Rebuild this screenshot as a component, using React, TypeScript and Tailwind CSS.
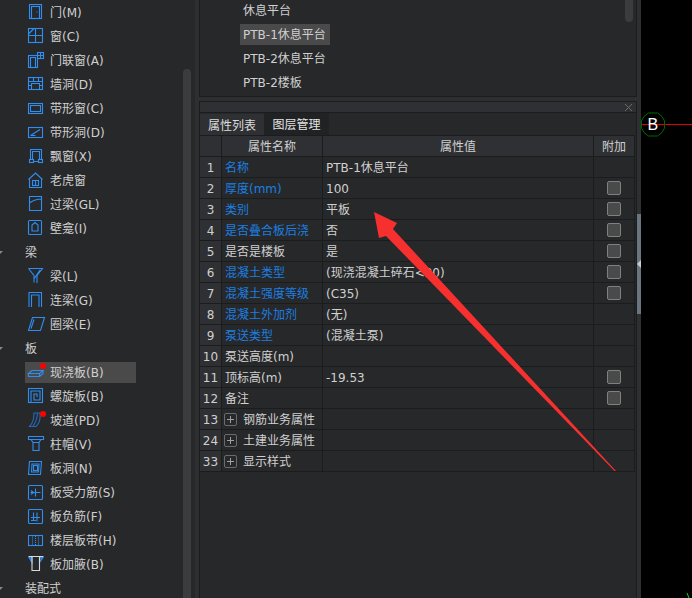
import React from 'react';

const blue = '#2f8ef0';

const icons: Record<string, React.ReactNode> = {
    door: <><rect x="3.5" y="2.5" width="12" height="14" /><rect x="5.5" y="4.5" width="8" height="12" /><path d="M10.5 10h1" /></>,
    window: <><rect x="2.5" y="2.5" width="14" height="14" /><path d="M9.5 2.5v14M2.5 9.5h14M2.5 8L8 2.5" /></>,
    doorWindow: <><rect x="2.5" y="5.5" width="9" height="12" /><rect x="4.5" y="7.5" width="5" height="10" /><rect x="11.5" y="2.5" width="6" height="6" /><path d="M14.5 2.5v6M11.5 5.5h6" /></>,
    wallHole: <><rect x="2.5" y="3.5" width="14" height="12" /><path d="M2.5 7.5h14M7.5 3.5v4M12.5 3.5v4M2.5 11.5h3M13.5 11.5h3M5.5 15.5v-6h8v6" /></>,
    strip: <><rect x="2.5" y="5.5" width="14" height="10" /><rect x="4.5" y="7.5" width="10" height="6" /></>,
    stripHole: <><rect x="2.5" y="5.5" width="14" height="10" /><path d="M4.5 13.5h5M4.5 13.5L14 7.5" /></>,
    bay: <><path d="M4.5 13.5V3.5h11v10M6.5 13.5V5.5h7v8M7.5 15.5h5" /><rect x="3.5" y="13.5" width="4" height="3" /><rect x="12.5" y="13.5" width="4" height="3" /></>,
    dormer: <><path d="M2.5 9.5l7-6.5 7 6.5M3.5 9v8.5h12V9" /><rect x="6.5" y="10.5" width="6" height="5" /><path d="M9.5 10.5v5" /></>,
    lintel: <><path d="M3.5 2.5h12v14h-12zM3.5 9Q9 5 15.5 5" /></>,
    niche: <><rect x="2.5" y="2.5" width="13" height="14" rx="1" /><path d="M6 13V7l3-2.5L12 7v6z" /></>,
    beam: <><path d="M2.5 2.5h14L11 9.5v7.5M2.5 2.5L8 9.5v7M8 13l6-9" /></>,
    linkBeam: <><path d="M3 17V2.5h12.5V17M5.5 17V5H13v12" /></>,
    ringBeam: <><path d="M6.5 3.5h12l-4 13H2.5zM8 5.5l-3 9" /></>,
    slab: <><path d="M2.5 11.5h11l3.5-3H6zM2.5 11.5v3h11v-3M13.5 14.5l3.5-3v-3" /><circle cx="17" cy="4" r="3" fill="#f00" stroke="none" /></>,
    spiral: <><rect x="2.5" y="2.5" width="14" height="14" /><path d="M5 16.5V5h9v9H8V8h3v3" /></>,
    ramp: <><path d="M3.5 16.5Q8 12 8 3h6q1 9-4 13.5zM7 16q4-5 4.5-13" stroke="#2569b8" /><circle cx="17" cy="4" r="3" fill="#f00" stroke="none" /></>,
    cap: <><path d="M2.5 2.5h15v3h-15zM5 5.5l2 3v8h6v-8l2-3M7 8.5h6" /></>,
    slabHole: <><path d="M3.5 3.5h12l-1 13h-12zM6 6h7l-.5 8H5.5z" /><rect x="7.5" y="7.5" width="4" height="5" /></>,
    rebar: <><rect x="2.5" y="3.5" width="14" height="14" rx="1" /><path d="M4.5 10.5h10M9.5 6.5v8M5 8.5l2.5 2-2.5 2" /></>,
    negRebar: <><rect x="2.5" y="3.5" width="14" height="14" rx="1" /><path d="M7.5 6.5v8M11 6.5v9M5 11.5h9M5 14.5h5" /></>,
    band: <><rect x="2.5" y="5.5" width="14" height="10" /><path d="M6.5 5.5v10M12.5 5.5v10M9.5 6v9" strokeDasharray="1 1" /></>,
    haunch: <><path d="M3 3.5h3v5zM17 3.5h-3.500v5z" fill="#2569b8" /><path d="M2.5 2.5h15M6 3v13.5h7.500V3" stroke="#d8d8d8" /></>,
};

const Icon = ({ name }: { name: string }) => (
    <svg width="20" height="20" viewBox="0 0 20 20" fill="none" stroke={blue} strokeWidth="1.1" className="shrink-0">
        {icons[name]}
    </svg>
);

type SideRow = { label: string; icon?: string; active?: boolean };

const sideRows: SideRow[] = [
    { label: '门(M)', icon: 'door' },
    { label: '窗(C)', icon: 'window' },
    { label: '门联窗(A)', icon: 'doorWindow' },
    { label: '墙洞(D)', icon: 'wallHole' },
    { label: '带形窗(C)', icon: 'strip' },
    { label: '带形洞(D)', icon: 'stripHole' },
    { label: '飘窗(X)', icon: 'bay' },
    { label: '老虎窗', icon: 'dormer' },
    { label: '过梁(GL)', icon: 'lintel' },
    { label: '壁龛(I)', icon: 'niche' },
    { label: '梁' },
    { label: '梁(L)', icon: 'beam' },
    { label: '连梁(G)', icon: 'linkBeam' },
    { label: '圈梁(E)', icon: 'ringBeam' },
    { label: '板' },
    { label: '现浇板(B)', icon: 'slab', active: true },
    { label: '螺旋板(B)', icon: 'spiral' },
    { label: '坡道(PD)', icon: 'ramp' },
    { label: '柱帽(V)', icon: 'cap' },
    { label: '板洞(N)', icon: 'slabHole' },
    { label: '板受力筋(S)', icon: 'rebar' },
    { label: '板负筋(F)', icon: 'negRebar' },
    { label: '楼层板带(H)', icon: 'band' },
    { label: '板加腋(B)', icon: 'haunch' },
    { label: '装配式' },
];

type PropRow = { no: number; name: string; value?: string; link?: boolean; check?: boolean; group?: boolean };

const propRows: PropRow[] = [
    { no: 1, name: '名称', value: 'PTB-1休息平台', link: true },
    { no: 2, name: '厚度(mm)', value: '100', link: true, check: true },
    { no: 3, name: '类别', value: '平板', link: true, check: true },
    { no: 4, name: '是否叠合板后浇', value: '否', link: true, check: true },
    { no: 5, name: '是否是楼板', value: '是', check: true },
    { no: 6, name: '混凝土类型', value: '(现浇混凝土碎石<20)', link: true, check: true },
    { no: 7, name: '混凝土强度等级', value: '(C35)', link: true, check: true },
    { no: 8, name: '混凝土外加剂', value: '(无)', link: true },
    { no: 9, name: '泵送类型', value: '(混凝土泵)', link: true },
    { no: 10, name: '泵送高度(m)' },
    { no: 11, name: '顶标高(m)', value: '-19.53', check: true },
    { no: 12, name: '备注', check: true },
    { no: 13, name: '钢筋业务属性', group: true },
    { no: 24, name: '土建业务属性', group: true },
    { no: 33, name: '显示样式', group: true },
];

const SideItem = ({ row }: { row: SideRow }) => {
    if (!row.icon) {
        return (
            <div className="h-6 flex items-center">
                <svg width="3" height="4" viewBox="0 0 3 4" fill="#8a8a8a" className="mr-[22px]"><path d="M0 1h3L0 4z" /></svg>
                <span className="pt-[2px]">{row.label}</span>
            </div>
        );
    }
    return (
        <div className="h-6 flex items-center">
            <div className={`ml-[25px] w-[111px] h-[21px] pl-px flex items-center gap-1 ${row.active ? 'bg-[#4a4a4b]' : ''}`}>
                <Icon name={row.icon} />
                <span className="pt-[2px]">{row.label}</span>
            </div>
        </div>
    );
};

const App: React.FC = () => {
    return (
        <div className="relative w-[692px] h-[598px] flex overflow-hidden bg-[#2e2f31] text-[12px] leading-none text-[#d0d0d0] font-['DejaVu_Sans','Noto_Sans_CJK_SC',sans-serif]">
            {/* component tree */}
            <aside className="w-[195px] h-full flex bg-[#27282a] overflow-hidden">
                <div className="flex-1">
                    {sideRows.map(row => <SideItem key={row.label} row={row} />)}
                </div>
                <div className="w-2 mr-1 mt-[69px] rounded-t bg-[#3b3c3e]" />
            </aside>

            {/* middle panels */}
            <main className="ml-1 w-[438px] h-full flex flex-col">
                <section className="h-[97px] flex border-l border-b border-r border-[#1b1c1e] bg-[#27282a] overflow-hidden">
                    <div className="flex-1 pl-10 -mt-0.5">
                        {['休息平台', 'PTB-1休息平台', 'PTB-2休息平台', 'PTB-2楼板'].map((name, i) => (
                            <div key={name} className="h-6 flex items-center">
                                <span className={`h-[21px] pt-[2px] px-[3px] flex items-center ${i === 1 ? 'bg-[#4a4a4b] pr-1' : ''}`}>{name}</span>
                            </div>
                        ))}
                    </div>
                    <div className="w-2 h-[22px] mr-[3px] rounded-b bg-[#3b3c3e]" />
                </section>

                <section className="mt-1 flex-1 border-l border-r border-t border-[#1b1c1e] bg-[#27282a]">
                    <div className="h-[10px] flex items-center justify-end pr-[3px] bg-[#2f3033] border-b border-[#1b1c1e] box-content">
                        <svg width="9" height="9" viewBox="0 0 9 9" stroke="#6a6b6d" strokeWidth="1"><path d="M1 1l7 7M8 1l-7 7" /></svg>
                    </div>
                    <div className="h-[22px] flex items-end">
                        <div className="w-16 h-[21px] pt-[2px] flex items-center justify-center bg-[#2f3033] text-[#dcdcdc]">属性列表</div>
                        <div className="w-[65px] h-[22px] pt-[2px] flex items-center justify-center bg-[#212224] text-[#e4e4e4]">图层管理</div>
                    </div>

                    <div className="w-[435px] border-t border-[#1b1c1e]">
                        <div className="flex h-[21px] bg-[#2f3033] border-b border-[#1b1c1e]">
                            <div className="w-[22px] border-r border-[#1b1c1e]" />
                            <div className="w-[101px] pt-[2px] flex items-center justify-center border-r border-[#1b1c1e]">属性名称</div>
                            <div className="w-[271px] pt-[2px] flex items-center justify-center border-r border-[#1b1c1e]">属性值</div>
                            <div className="w-[41px] pt-[2px] flex items-center justify-center border-r border-[#1b1c1e]">附加</div>
                        </div>
                        {propRows.map(row => (
                            <div key={row.no} className="flex h-[21px] border-b border-[#1b1c1e]">
                                <div className="w-[22px] pt-[2px] flex items-center justify-center bg-[#2f3033] border-r border-[#1b1c1e]">{row.no}</div>
                                <div className={`w-[101px] pl-[3px] flex items-center border-r border-[#1b1c1e] ${row.link ? 'text-[#1c7fe0]' : ''}`}>
                                    {row.group && (
                                        <span className="w-[13px] h-[13px] ml-[-1px] mr-[6px] flex items-center justify-center rounded-[2px] border border-[#6a6b6d]">
                                            <svg width="7" height="7" viewBox="0 0 7 7" stroke="#a0a0a0"><path d="M3.5 0v7M0 3.5h7" /></svg>
                                        </span>
                                    )}
                                    <span className="pt-[2px]">{row.name}</span>
                                </div>
                                <div className="w-[271px] pl-[3px] pt-[2px] flex items-center whitespace-pre border-r border-[#1b1c1e]">{row.value}</div>
                                <div className="w-[41px] flex items-center justify-center border-r border-[#1b1c1e]">
                                    {row.check && <span className="w-[14px] h-[14px] rounded-[2px] bg-[#4a4a4b] border border-[#808080]" />}
                                </div>
                            </div>
                        ))}
                    </div>
                </section>
            </main>

            {/* splitter */}
            <div className="w-1 h-full">
                <div className="mt-[214px] h-[100px] flex items-center bg-[#6b7580]">
                    <svg width="4" height="8" viewBox="0 0 4 8" fill="#c8ccd0"><path d="M4 0v8L0 4z" /></svg>
                </div>
            </div>

            {/* drawing canvas */}
            <div className="flex-1 h-full bg-black">
                <svg width="51" height="598" viewBox="0 0 51 598" fill="none">
                    <path d="M0 124.5H51" stroke="#e00000" />
                    <polygon points="7.5,113 16.5,113 21,116.5 23.5,121 23.5,128 21,132.5 16.5,136 7.5,136 3,132.5 .5,128 .5,121 3,116.5" stroke="#006a00" />
                    <text x="6.5" y="130" fill="#fff" fontSize="16" fontFamily="Liberation Sans">B</text>
                    <path d="M46 593l2 5" stroke="#00e000" />
                </svg>
            </div>

            {/* annotation arrow drawn over the table */}
            <svg className="absolute inset-0 pointer-events-none" width="692" height="598" viewBox="0 0 692 598">
                <polygon points="374,212 397,223 393,229 616,471 614.5,471 386,236 379,238" fill="#f5302f" />
            </svg>
        </div>
    );
};

export default App;
